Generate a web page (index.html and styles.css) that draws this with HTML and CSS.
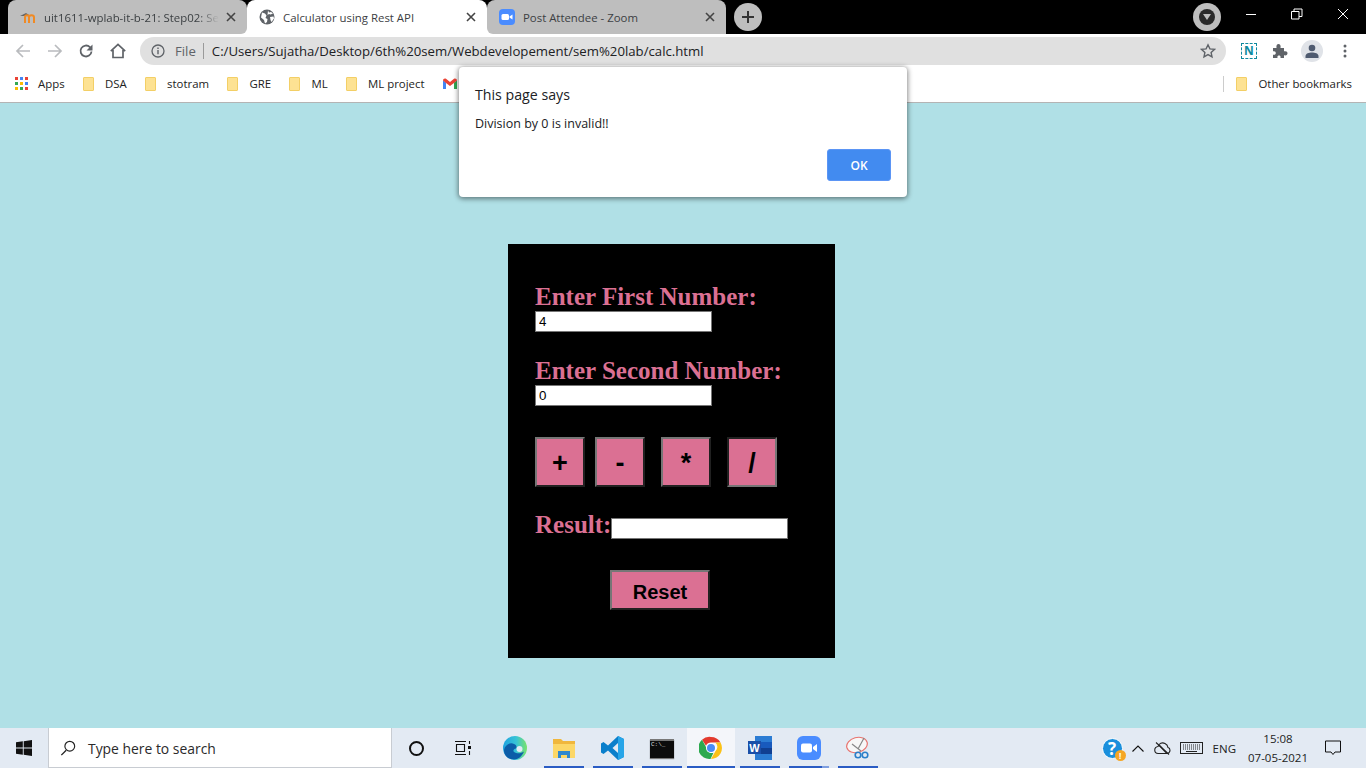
FILE: index.html
```html
<!DOCTYPE html>
<html lang="en">
<head>
    <meta charset="UTF-8">
    <meta name="viewport" content="width=device-width, initial-scale=1.0">
    <title>Calculator using Rest API</title>
    <link rel="stylesheet" href="styles.css">
</head>
<body>
    <div class="tabstrip">
        <div class="tab tab-left">
            <svg class="favicon" viewBox="0 0 16 16"><path d="M0 7l6-3 3 2-5 1z" fill="#666"/><path d="M5 14V8.500c0-3 4-3 4 0V14M9 14V8.500c0-3 5-3 5 0V14" fill="none" stroke="#f08a24" stroke-width="2"/></svg>
            <span class="tab-title fade">uit1611-wplab-it-b-21: Step02: Se</span>
            <svg class="tab-close" viewBox="0 0 10 10"><path d="M1 1l8 8M9 1l-8 8" stroke="#444" stroke-width="1.600"/></svg>
        </div>
        <div class="tab active">
            <svg class="favicon" viewBox="0 0 16 16"><circle cx="8" cy="8" r="7.500" fill="#5f6368"/><path d="M3 3.500l3 1 1.500 2-1 2.500 2 1-.5 3-2 1.500-1-3.500-3-2.500zM9 1.500l1 2 2-.5 2 1.500-2.500 1-1.500-.5-1.500 1zM11 8l3.500-.5.5 2-2.500 3.500-1-2z" fill="#fff"/></svg>
            <span class="tab-title">Calculator using Rest API</span>
            <svg class="tab-close" viewBox="0 0 10 10"><path d="M1 1l8 8M9 1l-8 8" stroke="#444" stroke-width="1.600"/></svg>
        </div>
        <div class="tab tab-right">
            <svg class="favicon" viewBox="0 0 16 16"><rect width="16" height="16" rx="4" fill="#4a8cff"/><rect x="2.500" y="5" width="7.500" height="6" rx="1.500" fill="#fff"/><path d="M10.500 7.500l3-2v5l-3-2z" fill="#fff"/></svg>
            <span class="tab-title">Post Attendee - Zoom</span>
            <svg class="tab-close" viewBox="0 0 10 10"><path d="M1 1l8 8M9 1l-8 8" stroke="#444" stroke-width="1.600"/></svg>
        </div>
        <div class="newtab">
            <svg width="14" height="14" viewBox="0 0 14 14"><path d="M7 1v12M1 7h12" stroke="#333" stroke-width="2"/></svg>
        </div>
        <div class="strip-right">
            <div class="media-btn"><span class="media-dot"><svg width="8" height="6" viewBox="0 0 8 6"><path d="M0 0h8L4 6z" fill="#bebebe"/></svg></span></div>
            <div class="winctl">
                <svg width="12" height="12" viewBox="0 0 12 12"><path d="M1 6.500h10" stroke="#fff"/></svg>
            </div>
            <div class="winctl">
                <svg width="12" height="12" viewBox="0 0 12 12"><path d="M.5 3.500h7.500v7.500H.5zM3 3.500V1h8v7.500H8" fill="none" stroke="#fff"/></svg>
            </div>
            <div class="winctl">
                <svg width="12" height="12" viewBox="0 0 12 12"><path d="M1 1l10 10M11 1L1 11" stroke="#fff"/></svg>
            </div>
        </div>
    </div>

    <div class="toolbar">
        <svg class="nav" viewBox="0 0 16 16"><path d="M15 8H2M8 2L2 8l6 6" fill="none" stroke="#b9bbbe" stroke-width="1.700"/></svg>
        <svg class="nav" viewBox="0 0 16 16"><path d="M1 8h13M8 2l6 6-6 6" fill="none" stroke="#b9bbbe" stroke-width="1.700"/></svg>
        <svg class="nav" viewBox="0 0 16 16"><path d="M13.500 8.500a5.500 5.500 0 1 1-1.600-4.400L13.500 5.700" fill="none" stroke="#5f6368" stroke-width="1.800"/><path d="M14.500 1.500v6h-6z" fill="#5f6368"/></svg>
        <svg class="nav" viewBox="0 0 16 16"><path d="M.8 8.200L8 1.500l7.200 6.700M3 7v7.500h10V7" fill="none" stroke="#5f6368" stroke-width="1.700"/></svg>
        <div class="omnibox">
            <svg class="info" viewBox="0 0 14 14"><circle cx="7" cy="7" r="6" fill="none" stroke="#5f6368" stroke-width="1.300"/><path d="M7 6v4.200M7 3.500v1.500" stroke="#5f6368" stroke-width="1.400"/></svg>
            <span class="scheme">File</span>
            <span class="omni-sep"></span>
            <span class="url">C:/Users/Sujatha/Desktop/6th%20sem/Webdevelopement/sem%20lab/calc.html</span>
            <svg class="star" viewBox="0 0 16 16"><path d="M8 1.800l1.900 4.100 4.500.5-3.300 3 .9 4.400L8 11.600l-4 2.200.9-4.400-3.300-3 4.500-.5z" fill="none" stroke="#5f6368" stroke-width="1.400"/></svg>
        </div>
        <div class="ext-icons">
            <span class="ext-n">N</span>
            <svg class="puzzle" viewBox="0 0 16 16"><path d="M1 5h3.500C4 2.500 5 1 6.500 1S9 2.500 8.500 5H12v3.300c2.500-.5 3.500.5 3.500 2s-1 2.500-3.500 2V15H8.500c.4-2-.6-2.500-1.500-2.500s-2 .5-1.500 2.500H1v-3.300c2 .4 2.800-.5 2.800-1.700S3 7.800 1 8.300z" fill="#5f6368"/></svg>
            <span class="avatar"><svg width="16" height="16" viewBox="0 0 16 16"><circle cx="8" cy="5" r="3.300" fill="#4f5b70"/><path d="M1.500 15v-2c0-2.500 3.500-3.500 6.500-3.500s6.500 1 6.500 3.500v2z" fill="#4f5b70"/></svg></span>
            <svg class="kebab" viewBox="0 0 4 14"><circle cx="2" cy="2" r="1.500" fill="#5f6368"/><circle cx="2" cy="7" r="1.500" fill="#5f6368"/><circle cx="2" cy="12" r="1.500" fill="#5f6368"/></svg>
        </div>
    </div>

    <div class="bookmarks">
        <div class="bm bm-apps">
            <svg class="apps" viewBox="0 0 13 13">
                <rect width="3" height="3" fill="#ea4335"/><rect x="5" width="3" height="3" fill="#4285f4"/><rect x="10" width="3" height="3" fill="#ea4335"/>
                <rect y="5" width="3" height="3" fill="#34a853"/><rect x="5" y="5" width="3" height="3" fill="#fbbc05"/><rect x="10" y="5" width="3" height="3" fill="#4285f4"/>
                <rect y="10" width="3" height="3" fill="#fbbc05"/><rect x="5" y="10" width="3" height="3" fill="#34a853"/><rect x="10" y="10" width="3" height="3" fill="#ea4335"/>
            </svg>
            <span>Apps</span>
        </div>
        <div class="bm"><span class="folder"></span><span>DSA</span></div>
        <div class="bm"><span class="folder"></span><span>stotram</span></div>
        <div class="bm"><span class="folder"></span><span>GRE</span></div>
        <div class="bm"><span class="folder"></span><span>ML</span></div>
        <div class="bm"><span class="folder"></span><span>ML project</span></div>
        <svg class="gmail" viewBox="0 0 14 11"><path d="M0 2.500V11h3V4.500z" fill="#4285f4"/><path d="M14 2.500V11h-3V4.500z" fill="#34a853"/><path d="M0 2.500C0 .5 2 0 3 .8L7 4l4-3.200c1-.8 3-.3 3 1.700L11 5 7 8 3 5z" fill="#ea4335"/></svg>
        <div class="bm-right">
            <span class="bm-sep"></span>
            <div class="bm"><span class="folder"></span><span>Other bookmarks</span></div>
        </div>
    </div>

    <main class="page">
        <div class="calc">
            <div class="field">
                <label class="lbl">Enter First Number:</label>
                <input class="num" type="text" value="4">
            </div>
            <div class="field">
                <label class="lbl">Enter Second Number:</label>
                <input class="num" type="text" value="0">
            </div>
            <div class="ops">
                <button class="op">+</button>
                <button class="op">-</button>
                <button class="op op-wide">*</button>
                <button class="op op-wide pressed">/</button>
            </div>
            <div class="result">
                <label class="lbl">Result:</label><input class="num" type="text">
            </div>
            <button class="reset">Reset</button>
        </div>
    </main>

    <div class="taskbar">
        <svg class="start" viewBox="0 0 16 16"><path d="M0 2.300L6.800 1.300V7.500H0zM7.700 1.200L16 0V7.500H7.700zM0 8.500H6.800V14.700L0 13.700zM7.700 8.500H16V16L7.700 14.800z" fill="#111"/></svg>
        <div class="search">
            <svg class="glass" viewBox="0 0 18 18"><circle cx="11" cy="7" r="5.500" fill="none" stroke="#222" stroke-width="1.300"/><path d="M7 11.500L1.500 17" stroke="#222" stroke-width="1.500"/></svg>
            <span>Type here to search</span>
        </div>
        <div class="tb-cell cortana"><span class="ring"></span></div>
        <div class="tb-cell taskview">
            <svg width="16" height="14" viewBox="0 0 16 14"><path d="M0 .5h11M0 13.500h11M1.500 3.500h8v7h-8zM14.500 0v3M14.500 10v4" fill="none" stroke="#111" stroke-width="1.100"/><rect x="13" y="5" width="3" height="3" fill="#111"/></svg>
        </div>
        <div class="tb-cell edge">
            <svg class="appicon" viewBox="0 0 24 24"><defs><linearGradient id="edgeA" x1="0" y1=".5" x2="1" y2=".5"><stop offset="0" stop-color="#1fa3e0"/><stop offset=".55" stop-color="#37c3d6"/><stop offset="1" stop-color="#7be36a"/></linearGradient></defs><circle cx="12" cy="12" r="12" fill="url(#edgeA)"/><path d="M1 14c1-5 6-8 10-6 2.500 1 3 3 2 4.500-2 .5-3.500 2-2 3.500 3 2 7 1.500 10-.5-2 5-6 8-10 8-6 0-10-4-10-9.500z" fill="#0c5da8"/><circle cx="16.500" cy="13" r="3" fill="#e3eaf3"/></svg>
        </div>
        <div class="tb-cell open">
            <svg class="appicon" viewBox="0 0 24 24"><path d="M1 3h8l2 2h12v17H1z" fill="#f0b73d"/><path d="M1 8h22v14H1z" fill="#fcd767"/><path d="M6 22v-7h12v7h-3v-3H9v3z" fill="#2f88cf"/></svg>
        </div>
        <div class="tb-cell open">
            <svg class="appicon" viewBox="0 0 24 24"><path d="M17 0l6 3v18l-6 3-10-9.500L2.500 18 0 16.500v-9L2.500 6 7 9.500zM17 7l-5.500 5 5.500 5z" fill="#0a7fcb"/><path d="M17 0l6 3v18l-6 3z" fill="#27a5e8"/></svg>
        </div>
        <div class="tb-cell open">
            <div class="cmd"><span class="cmd-txt">C:\_</span></div>
        </div>
        <div class="tb-cell open lit">
            <svg class="appicon" viewBox="0 0 24 24"><path d="M12 1a11 11 0 0 1 9.500 5.500H12a5.500 5.500 0 0 0-5 3.200L3 3.800A11 11 0 0 1 12 1z" fill="#e33b2e"/><path d="M21.500 6.500A11 11 0 0 1 12 23l4.700-8.200a5.500 5.500 0 0 0-.5-8.300z" fill="#fbc116"/><path d="M3 3.800L7.500 12a5.500 5.500 0 0 0 7 4.800L11.500 23A11 11 0 0 1 3 3.800z" fill="#2da94f"/><circle cx="12" cy="12" r="5" fill="#fff"/><circle cx="12" cy="12" r="4" fill="#4a8bf5"/></svg>
        </div>
        <div class="tb-cell open">
            <svg class="appicon" viewBox="0 0 24 24"><rect x="7" width="17" height="24" fill="#2b7cd3"/><rect x="7" y="6" width="17" height="6" fill="#185abd"/><rect x="7" y="12" width="17" height="6" fill="#103f91"/><rect x="0" y="5" width="13" height="13" fill="#1a4fa8"/><text class="word-w" x="6.500" y="15.500" text-anchor="middle">W</text></svg>
        </div>
        <div class="tb-cell open zoomcell">
            <svg class="appicon" viewBox="0 0 24 24"><rect width="24" height="24" rx="6" fill="#4a8cff"/><rect x="4" y="7.500" width="11" height="9" rx="2" fill="#fff"/><path d="M16 11l4-3v8l-4-3z" fill="#fff"/></svg>
        </div>
        <div class="tb-cell open">
            <svg class="appicon" viewBox="0 0 24 24"><ellipse cx="11" cy="9" rx="10.500" ry="7.500" fill="#f7f7f7" stroke="#e8736e" stroke-width="1.200" transform="rotate(-15 11 9)"/><path d="M6 8l9 7M18 2l-6 11" stroke="#888" stroke-width="1.200"/><circle cx="12" cy="19" r="2.800" fill="none" stroke="#2a7fc9" stroke-width="1.600"/><circle cx="19" cy="19" r="2.800" fill="none" stroke="#2a7fc9" stroke-width="1.600"/></svg>
        </div>
        <div class="tray">
            <span class="help">?<span class="help-warn">!</span></span>
            <svg class="chev" viewBox="0 0 12 7"><path d="M.5 6.500L6 1l5.500 5.500" fill="none" stroke="#111" stroke-width="1.100"/></svg>
            <svg class="cloud" viewBox="0 0 18 14"><path d="M4.500 12.500a3.500 3.500 0 0 1-.5-7C5 2.500 8 1 11 2.500c2 1 2.800 2.500 3 4 2.500.5 3 5-.5 6z" fill="none" stroke="#222" stroke-width="1.100"/><path d="M4 4l8 8.500 1.500-.5-8-8.500z" fill="#333"/><path d="M2 1.500l13 12" stroke="#222" stroke-width="1.100"/></svg>
            <svg class="kbd" viewBox="0 0 23 12"><rect x=".5" y=".5" width="22" height="11" fill="none" stroke="#222"/><path d="M3 3h17M3 5h17M3 7h17" stroke="#222" stroke-dasharray="1 1"/><path d="M6 9.500h11" stroke="#222"/></svg>
            <span class="lang">ENG</span>
            <div class="clock"><span>15:08</span><span>07-05-2021</span></div>
            <svg class="notif" viewBox="0 0 16 16"><path d="M.5 1h15v11H10l-2 2.500L6 12H.5z" fill="none" stroke="#111"/></svg>
        </div>
    </div>

    <div class="alert">
        <div class="alert-title">This page says</div>
        <div class="alert-msg">Division by 0 is invalid!!</div>
        <div class="alert-foot"><button class="alert-ok">OK</button></div>
    </div>
</body>
</html>
```

FILE: styles.css
```css
* {
    box-sizing: border-box;
}
html, body {
    height: 100%;
}
body {
    margin: 0;
    width: 1366px;
    height: 768px;
    overflow: hidden;
    display: flex;
    flex-direction: column;
    font-family: 'Open Sans', 'Noto Sans', sans-serif;
    background: #b0e0e6;
    color: #222;
}

/* tabs */
.tabstrip {
    height: 34px;
    flex: none;
    background: #000;
    display: flex;
    align-items: flex-end;
    padding-left: 8px;
}
.tab {
    width: 239px;
    height: 34px;
    position: relative;
    z-index: 1;
    background: #bebebe;
    border-radius: 8px 8px 0 0;
    display: flex;
    align-items: center;
    padding: 0 11px 0 12px;
    font-size: 11.4px;
    color: #3c4043;
}
.tab.active {
    width: 240px;
    z-index: 0;
    background: #fff;
}
.tab.active::before {
    content: "";
    position: absolute;
    left: -8px;
    right: -8px;
    bottom: 0;
    height: 8px;
    background: #fff;
    z-index: -1;
}
.tab-left {
    border-bottom-right-radius: 6px;
}
.tab-right {
    border-bottom-left-radius: 6px;
}
.favicon {
    width: 16px;
    height: 16px;
    flex: none;
    margin-right: 8px;
}
.tab-title {
    flex: 1;
    overflow: hidden;
    white-space: nowrap;
}
.tab-title.fade {
    -webkit-mask-image: linear-gradient(90deg, #000 88%, transparent);
    mask-image: linear-gradient(90deg, #000 88%, transparent);
}
.tab-close {
    width: 10px;
    height: 10px;
    flex: none;
    margin-left: 7px;
}
.newtab {
    width: 28px;
    height: 28px;
    margin: 0 0 3px 8px;
    border-radius: 50%;
    background: #bebebe;
    display: flex;
    align-items: center;
    justify-content: center;
}
.strip-right {
    margin-left: auto;
    display: flex;
    align-items: center;
    height: 34px;
}
.media-btn {
    width: 28px;
    height: 28px;
    margin-right: 7px;
    border-radius: 50%;
    background: #bebebe;
    display: flex;
    align-items: center;
    justify-content: center;
}
.media-dot {
    width: 16px;
    height: 16px;
    border-radius: 50%;
    background: #2a2a2a;
    display: flex;
    align-items: center;
    justify-content: center;
}
.winctl {
    width: 46px;
    height: 34px;
    display: flex;
    align-items: center;
    justify-content: center;
    padding-bottom: 6px;
}

/* toolbar */
.toolbar {
    height: 34px;
    flex: none;
    background: #fff;
    display: flex;
    align-items: center;
    padding-left: 15px;
}
.nav {
    width: 16px;
    height: 16px;
    flex: none;
    margin-right: 15.67px;
}
.omnibox {
    width: 1086px;
    height: 28px;
    margin-left: -1.67px;
    border-radius: 14px;
    background: #e0e0e0;
    display: flex;
    align-items: center;
    padding: 0 11px;
    font-size: 13.2px;
}
.info {
    width: 14px;
    height: 14px;
    flex: none;
    margin-right: 10px;
}
.scheme {
    color: #5f6368;
}
.omni-sep {
    width: 1px;
    height: 16px;
    background: #9a9a9a;
    margin: 0 8px 0 7px;
}
.url {
    color: #202124;
}
.star {
    width: 16px;
    height: 16px;
    margin-left: auto;
    margin-right: -1px;
}
.ext-icons {
    display: flex;
    align-items: center;
    margin-left: 15px;
}
.ext-n {
    width: 16px;
    height: 16px;
    border: 1px dashed #0e8a9e;
    color: #0e8a9e;
    font-weight: 700;
    font-size: 12px;
    line-height: 14px;
    text-align: center;
    margin-right: 15px;
}
.puzzle {
    width: 16px;
    height: 16px;
    margin-right: 13px;
}
.avatar {
    width: 22px;
    height: 22px;
    border-radius: 50%;
    background: #e0e3e8;
    display: flex;
    align-items: center;
    justify-content: center;
    margin-right: 20px;
}
.kebab {
    width: 4px;
    height: 14px;
}

/* bookmarks */
.bookmarks {
    height: 35px;
    flex: none;
    background: #fff;
    border-bottom: 1px solid #b4b4b4;
    display: flex;
    align-items: center;
    gap: 18.4px;
    padding: 0 14px 3px 15px;
    font-size: 11.4px;
    color: #222;
}
.bm {
    display: flex;
    align-items: center;
    gap: 11px;
    white-space: nowrap;
}
.bm-apps {
    gap: 10px;
}
.apps {
    width: 13px;
    height: 13px;
}
.folder {
    width: 11px;
    height: 14px;
    background: #fde293;
    border: 1px solid #f3cf66;
    border-radius: 1px;
}
.gmail {
    width: 14px;
    height: 11px;
}
.bm-right {
    margin-left: auto;
    display: flex;
    align-items: center;
    gap: 12px;
}
.bm-sep {
    width: 1px;
    height: 16px;
    background: #ccc;
}

/* calculator */
.page {
    flex: 1;
    padding: 141px 0 0 508px;
}
.calc {
    width: 327px;
    height: 414px;
    background: #000;
    padding: 39px 27px 0;
    font-family: 'Liberation Serif', serif;
}
.field {
    margin-bottom: 25px;
}
.lbl {
    display: block;
    color: #db7093;
    font-weight: 700;
    font-size: 25px;
    line-height: 28px;
}
.num {
    display: block;
    width: 177px;
    height: 21px;
    padding: 1px 3px;
    border: 1px solid #767676;
    background: #fff;
    font-family: 'Liberation Sans', sans-serif;
    font-size: 13.333px;
    color: #000;
    border-radius: 0;
    outline: none;
}
.ops {
    display: flex;
    margin-top: 31px;
}
.op {
    width: 50px;
    height: 50px;
    margin-right: 10px;
    padding: 3px 0 0;
    background: #db7093;
    border: 2px outset #767676;
    font-family: 'Liberation Sans', sans-serif;
    font-weight: 700;
    font-size: 27px;
    color: #000;
}
.op-wide {
    margin-left: 6px;
}
.op.pressed {
    border-style: inset;
}
.result {
    display: flex;
    align-items: flex-start;
    margin-top: 24px;
}
.result .num {
    margin-top: 7px;
}
.reset {
    display: block;
    width: 100px;
    height: 40px;
    margin: 31px 0 0 75px;
    padding: 5px 0 0;
    background: #db7093;
    border: 2px outset #767676;
    font-family: 'Liberation Sans', sans-serif;
    font-weight: 700;
    font-size: 20px;
    color: #000;
}

/* taskbar */
.taskbar {
    height: 40px;
    flex: none;
    background: #e3eaf3;
    display: flex;
    align-items: stretch;
    position: relative;
}
.start {
    width: 16px;
    height: 16px;
    margin: 12px 16px 0 16px;
}
.search {
    width: 344px;
    background: #fff;
    border: 1px solid #c8ccd2;
    border-top: none;
    display: flex;
    align-items: center;
    padding: 1px 0 0 11px;
    font-size: 13.9px;
    color: #2a2a2a;
}
.glass {
    width: 16px;
    height: 16px;
    margin-right: 12px;
}
.tb-cell {
    width: 40px;
    margin-right: 9px;
    display: flex;
    align-items: center;
    justify-content: center;
}
.cortana {
    margin-left: 4px;
    margin-right: 7px;
}
.ring {
    width: 15px;
    height: 15px;
    border: 2px solid #111;
    border-radius: 50%;
}
.taskview {
    margin-right: 12px;
}
.appicon {
    width: 24px;
    height: 24px;
}
.open {
    border-bottom: 2px solid #2a5cc4;
    padding-top: 2px;
}
.lit {
    width: 48px;
    margin: 0 5px 0 -4px;
    background: #f4f6fa;
}
.zoomcell {
    border-image: linear-gradient(90deg, #2a5cc4 80%, #7f9fe0 80%) 1;
}
.cmd {
    width: 24px;
    height: 19px;
    background: #0c0c0c;
    border-top: 2px solid #777;
    box-shadow: 0 1px 1px #777;
}
.cmd-txt {
    display: block;
    font-family: 'Liberation Mono', monospace;
    font-size: 6px;
    line-height: 8px;
    color: #ddd;
    padding-left: 1px;
}
.word-w {
    font-family: 'Liberation Sans', sans-serif;
    font-weight: 700;
    font-size: 11px;
    fill: #fff;
}
.tray {
    margin-left: auto;
    display: flex;
    align-items: center;
    font-size: 11.5px;
    color: #222;
}
.help {
    width: 21px;
    height: 21px;
    border-radius: 50%;
    background: #1a8fdc;
    border: 1px solid #fff;
    color: #fff;
    font-weight: 700;
    font-size: 17px;
    line-height: 19px;
    text-align: center;
    position: relative;
    margin-right: 9px;
}
.help-warn {
    position: absolute;
    right: -4px;
    bottom: -3px;
    width: 11px;
    height: 11px;
    border-radius: 50%;
    background: #f5a623;
    font-size: 8px;
    line-height: 11px;
}
.chev {
    width: 12px;
    height: 7px;
    margin-right: 10px;
}
.cloud {
    width: 18px;
    height: 14px;
    margin-right: 8px;
}
.kbd {
    width: 23px;
    height: 12px;
    margin-right: 10px;
}
.lang {
    margin-right: 12px;
}
.clock {
    width: 60px;
    margin-right: 17px;
    display: flex;
    flex-direction: column;
    align-items: center;
    line-height: 19px;
    white-space: nowrap;
}
.notif {
    width: 16px;
    height: 16px;
    margin-right: 25px;
}

/* javascript alert */
.alert {
    position: absolute;
    left: 459px;
    top: 67px;
    width: 448px;
    height: 130px;
    background: #fff;
    border-radius: 4px;
    box-shadow: 0 1px 5px 1px rgba(0,0,0,0.45);
    padding: 18px 16px 0;
    color: #202124;
}
.alert-title {
    font-size: 14.2px;
    line-height: 20px;
}
.alert-msg {
    font-size: 12.5px;
    line-height: 16px;
    margin-top: 11px;
}
.alert-foot {
    display: flex;
    justify-content: flex-end;
    margin-top: 17px;
}
.alert-ok {
    width: 64px;
    height: 32px;
    background: #428bf0;
    border: 1px solid #5b95f5;
    border-radius: 3px;
    color: #fff;
    font-family: inherit;
    font-weight: 600;
    font-size: 12px;
}
```
